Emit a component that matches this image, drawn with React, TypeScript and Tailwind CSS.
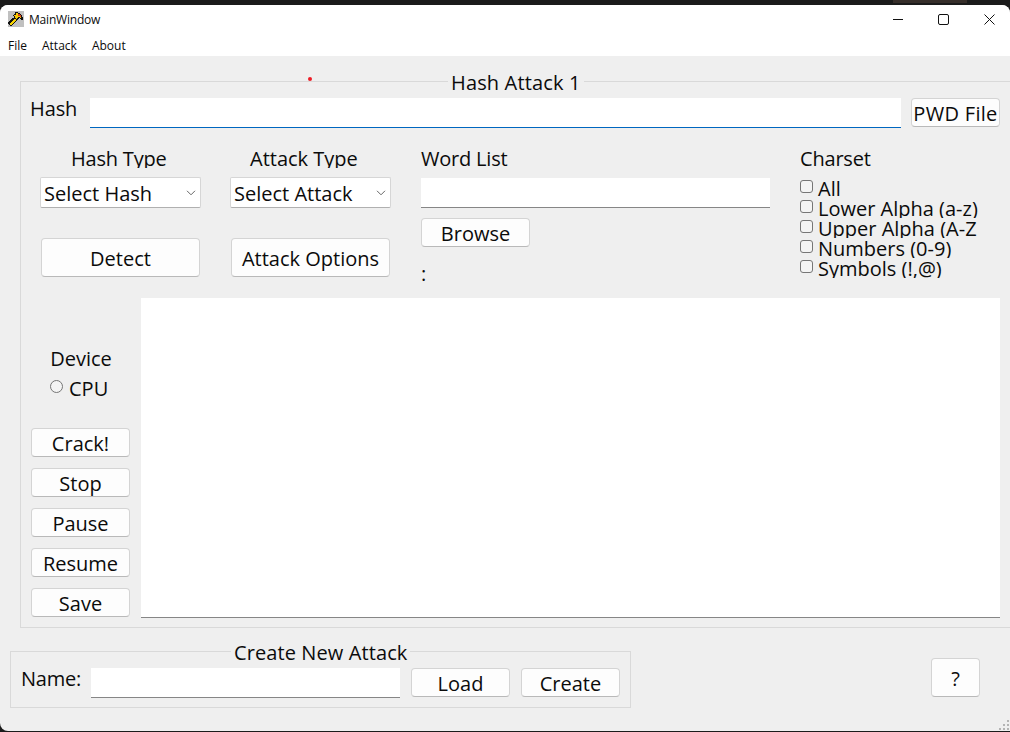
import type { ReactNode } from "react";

const BUTTON =
  "flex items-center justify-center rounded-[4px] border border-[#d4d4d4] border-b-[#b9b9b9] bg-[#fdfdfd] pt-[2px] text-[20px] leading-none text-[#0b0b0b]";
const FIELD = "bg-white border-b border-[#868686]";

function Btn({ className, children }: { className: string; children: ReactNode }) {
  return <button className={`${BUTTON} ${className}`}>{children}</button>;
}

function Combo({ label }: { label: string }) {
  return (
    <div className="flex h-[31px] w-[161px] items-center justify-between rounded-[2px] border border-[#d6d6d6] border-b-[#b0b0b0] bg-white pl-[3px] pr-[3px] pt-[2px]">
      <span className="leading-none">{label}</span>
      <svg width="10" height="6" viewBox="0 0 10 6" fill="none" stroke="#666" strokeWidth="1" className="mb-[2px] mr-[1px]">
        <path d="M1 0.8 L5 4.8 L9 0.8" />
      </svg>
    </div>
  );
}

function Check({ label }: { label: string }) {
  return (
    <div className="flex h-5 items-center overflow-hidden leading-5">
      <span className="mt-[-3px] h-[13px] w-[13px] shrink-0 rounded-[3px] border border-[#767676] bg-[#f4f4f4]" />
      <span className="ml-[5px] mt-[2px] whitespace-nowrap">{label}</span>
    </div>
  );
}

function HammerIcon() {
  return (
    <svg width="16" height="16" viewBox="0 0 16 16" shapeRendering="crispEdges">
      <rect width="16" height="16" fill="#c0c0c0" />
      {/* head */}
      <path d="M7 1h3v1h2v1h1v1h1v2h1v3h-2v-1h-1v-1h-1v1h-1v1h-2v-1h-1v-1h-1v-2h-1v-1h1v-1h1z" fill="#111" />
      <path d="M8 2h2v1h2v1h1v3h-1v-1h-2v1h-1v1h-1v-1h-1v-2h-1v-1h2z" fill="#f7c800" />
      <path d="M10 3h2v1h1v2h-1v-1h-2z" fill="#d8401c" />
      {/* handle */}
      <path d="M6 7h2v1h1v2h-1v1h-1v1h-1v1h-1v1h-1v1h-2v-1h-1v-1h-1v-2h1v-1h1v-1h1v-1h1v-1h2z" fill="#111" />
      <path d="M6 8h2v2h-1v1h-1v1h-1v1h-1v1h-2v-2h1v-1h1v-1h1v-1h1z" fill="#f7d400" />
    </svg>
  );
}

export default function App() {
  return (
    <div
      className="relative h-[732px] w-[1010px] overflow-hidden bg-[#1b1b1b] text-[20px] text-[#0b0b0b]"
      style={{ fontFamily: '"Open Sans", "Noto Sans", sans-serif' }}
    >
      <div className="mt-[5px] flex h-[726px] flex-col overflow-hidden rounded-t-[8px] rounded-bl-[8px] bg-[#efefef]">
        {/* Title bar */}
        <div className="flex h-[28px] items-center bg-white pl-2 text-[12px]">
          <HammerIcon />
          <span className="ml-[5px] mt-[2px] tracking-[-0.2px]">MainWindow</span>
          <div className="ml-auto flex items-center">
            <svg width="10" height="10" viewBox="0 0 10 10" className="mr-[35px]" stroke="#111" fill="none">
              <path d="M0 5.5H10" />
            </svg>
            <svg width="11" height="11" viewBox="0 0 11 11" className="mr-[35px]" stroke="#111" fill="none">
              <rect x="0.5" y="0.5" width="10" height="10" rx="1.5" />
            </svg>
            <svg width="11" height="11" viewBox="0 0 11 11" className="mr-[15px]" stroke="#111" fill="none">
              <path d="M0.5 0.5L10.5 10.5M10.5 0.5L0.5 10.5" />
            </svg>
          </div>
        </div>
        {/* Menu */}
        <div className="flex h-[23px] items-center gap-[15px] bg-white pl-2 pt-[2px] text-[12px]">
          <span>File</span>
          <span>Attack</span>
          <span>About</span>
        </div>

        {/* Hash Attack group */}
        <fieldset className="ml-5 mt-3 h-[560px] w-[1000px] shrink-0 border border-[#d9d9d9]">
          <legend className="ml-[427px] h-[27px] px-[3px] pt-[1px] leading-[27px] tracking-[0.15px]">Hash Attack 1</legend>
          <div className="mt-[3px] flex pl-[9px]">
            <span className="h-[21px] w-[60px] leading-[21px] tracking-[-0.1px]">Hash</span>
            <div className="h-[30px] w-[811px] border-b border-[#0067c0] bg-white" />
            <Btn className="ml-[10px] h-[29px] w-[89px] tracking-[0.3px]">PWD File</Btn>
          </div>

          <div className="ml-[19px] mt-5 flex h-[150px]">
            <div className="flex w-[161px] flex-col">
              <div className="h-5 overflow-hidden whitespace-nowrap pl-[31px] pt-px leading-5 tracking-[-0.2px]">Hash Type</div>
              <div className="mt-[9px]">
                <Combo label="Select Hash" />
              </div>
              <Btn className="ml-px mt-[30px] h-[39px] w-[159px]">Detect</Btn>
            </div>
            <div className="ml-[29px] flex w-[161px] flex-col">
              <div className="h-5 overflow-hidden whitespace-nowrap pl-[20px] pt-px leading-5">Attack Type</div>
              <div className="mt-[9px]">
                <Combo label="Select Attack" />
              </div>
              <Btn className="ml-px mt-[30px] h-[39px] w-[159px]">Attack Options</Btn>
            </div>
            <div className="ml-[30px] flex w-[349px] flex-col">
              <div className="h-5 pt-px leading-5 tracking-[-0.2px]">Word List</div>
              <div className={`mt-[10px] h-[30px] ${FIELD}`} />
              <Btn className="mt-[10px] h-[29px] w-[109px]">Browse</Btn>
              <div className="mt-[17px] h-5 leading-5">:</div>
            </div>
            <div className="ml-[30px] flex w-[190px] flex-col">
              <div className="h-5 pt-px leading-5 tracking-[-0.2px]">Charset</div>
              <div className="mt-[10px] flex flex-col">
                <Check label="All" />
                <Check label="Lower Alpha (a-z)" />
                <Check label="Upper Alpha (A-Z" />
                <Check label="Numbers (0-9)" />
                <Check label="Symbols (!,@)" />
              </div>
            </div>
          </div>

          <div className="flex pl-[10px]">
            <div className="flex w-[99px] flex-col">
              <div className="mt-[50px] h-5 pl-[1px] pt-px text-center leading-5">Device</div>
              <div className="mt-[10px] flex h-5 items-center pl-[19px] leading-5">
                <span className="mt-[-4px] h-[13px] w-[13px] rounded-full border border-[#767676] bg-[#f4f4f4]" />
                <span className="ml-[6px] mt-[2px]">CPU</span>
              </div>
              <div className="mt-[30px] flex flex-col gap-[11px]">
                <Btn className="h-[29px] w-[99px]">Crack!</Btn>
                <Btn className="h-[29px] w-[99px]">Stop</Btn>
                <Btn className="h-[29px] w-[99px]">Pause</Btn>
                <Btn className="h-[29px] w-[99px]">Resume</Btn>
                <Btn className="h-[29px] w-[99px]">Save</Btn>
              </div>
            </div>
            <div className={`ml-[11px] h-[320px] w-[859px] ${FIELD}`} />
          </div>
        </fieldset>

        {/* Create New Attack group */}
        <div className="mt-[10px] flex items-start">
          <fieldset className="ml-[10px] h-[70px] w-[621px] shrink-0 border border-[#d9d9d9]">
            <legend className="ml-[220px] h-[27px] px-[3px] pt-[1px] leading-[27px] tracking-[0.1px]">Create New Attack</legend>
            <div className="mt-[3px] flex pl-[10px]">
              <span className="w-[70px] leading-[21px] tracking-[-0.2px]">Name:</span>
              <div className={`h-[30px] w-[309px] ${FIELD}`} />
              <Btn className="ml-[11px] h-[29px] w-[99px]">Load</Btn>
              <Btn className="ml-[11px] h-[29px] w-[99px]">Create</Btn>
            </div>
          </fieldset>
          <Btn className="ml-[300px] mt-[20px] h-[39px] w-[49px]">?</Btn>
        </div>
      </div>

      {/* Desktop showing through above the window */}
      <span className="absolute left-[893px] top-0 h-[3px] w-[74px] bg-[#362e2a]" />
      {/* Stray red pixel over the group box */}
      <span className="absolute left-[308px] top-[77px] h-[4px] w-[4px] rounded-full bg-[#ee1c25]" />
      {/* Size grip */}
      <svg width="12" height="12" viewBox="0 0 12 12" className="absolute bottom-[1px] right-0" fill="#b4b4b4" shapeRendering="crispEdges">
        <rect x="9" y="1" width="2" height="2" />
        <rect x="5" y="5" width="2" height="2" />
        <rect x="9" y="5" width="2" height="2" />
        <rect x="1" y="9" width="2" height="2" />
        <rect x="5" y="9" width="2" height="2" />
        <rect x="9" y="9" width="2" height="2" />
      </svg>
    </div>
  );
}
